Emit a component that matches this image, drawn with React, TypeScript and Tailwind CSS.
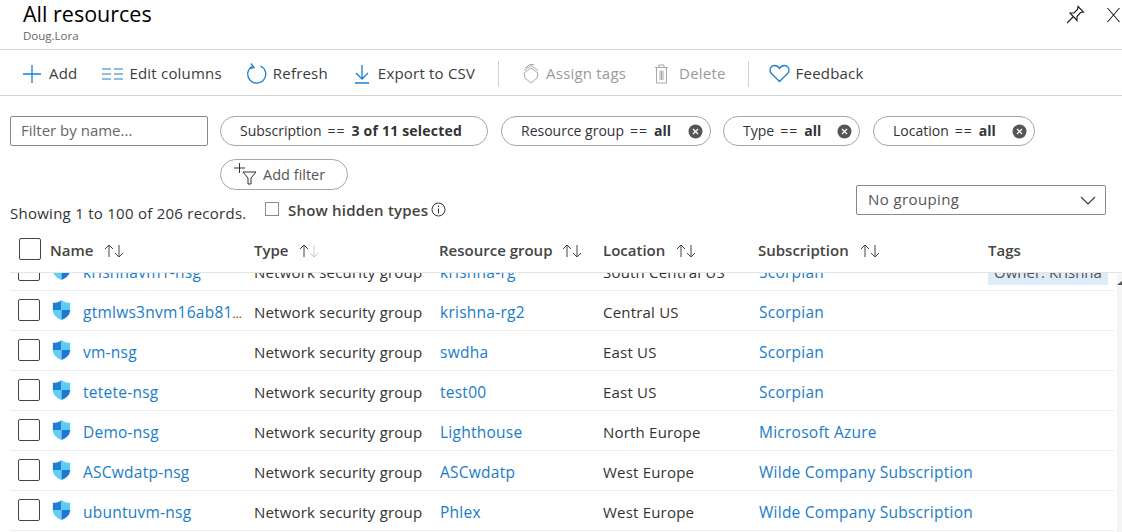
const rows = [
  { name: 'krishnavm1-nsg', group: 'krishna-rg', location: 'South Central US', sub: 'Scorpian', tag: 'Owner: Krishna' },
  { name: 'gtmlws3nvm16ab81', cut: true, group: 'krishna-rg2', location: 'Central US', sub: 'Scorpian' },
  { name: 'vm-nsg', group: 'swdha', location: 'East US', sub: 'Scorpian' },
  { name: 'tetete-nsg', group: 'test00', location: 'East US', sub: 'Scorpian' },
  { name: 'Demo-nsg', group: 'Lighthouse', location: 'North Europe', sub: 'Microsoft Azure' },
  { name: 'ASCwdatp-nsg', group: 'ASCwdatp', location: 'West Europe', sub: 'Wilde Company Subscription' },
  { name: 'ubuntuvm-nsg', group: 'Phlex', location: 'West Europe', sub: 'Wilde Company Subscription' },
]

const gridCols = 'grid grid-cols-[33px_32px_171px_186px_163px_156px_229px_126px] items-center'
const linkText = "whitespace-nowrap pt-[6px] text-[15.5px] font-medium tracking-[0.25px] text-[#1a7cc7]"

const Shield = () => (
  <svg className="ml-px" width="19" height="22" viewBox="0 0 22 24" preserveAspectRatio="none">
    <path d="M11 1 C8 3.5 5 4 1 4 V12 H11 Z" fill="#1f7fd6" />
    <path d="M11 1 C14 3.5 17 4 21 4 V12 H11 Z" fill="#5ccdf2" />
    <path d="M1 12 C1 17.5 6 21 11 23 V12 Z" fill="#62cff3" />
    <path d="M21 12 C21 17.5 16 21 11 23 V12 Z" fill="#1c78d2" />
  </svg>
)

const SortArrows = ({ faded = false }: { faded?: boolean }) => (
  <svg width="22" height="16" viewBox="0 0 22 16" fill="none" strokeWidth="1">
    <path d="M6 14 V2 M2 6 L6 2 L10 6" stroke="#444" />
    <path d="M16 2 V14 M12 10 L16 14 L20 10" stroke={faded ? '#c8c8c8' : '#444'} />
  </svg>
)

const ClearIcon = () => (
  <svg width="15" height="15" viewBox="0 0 15 15">
    <circle cx="7.5" cy="7.5" r="7" fill="#555" />
    <path d="M5 5 L10 10 M10 5 L5 10" stroke="#fff" strokeWidth="1.2" />
  </svg>
)

const Pill = ({ label, value, className }: { label: string; value: string; className: string }) => (
  <div className={`${className} flex h-[30px] items-center rounded-full border border-[#a6a6a6] pl-[19px] pr-[7px] text-[14px] tracking-normal`}>
    <span className="pb-[2px]">{label}</span>
    <span className="ml-[6px] pb-[2px] tracking-[1px]">==</span>
    <span className="ml-[6px] pb-[2px] font-bold">{value}</span>
    <span className="ml-auto flex">
      <ClearIcon />
    </span>
  </div>
)

const ToolbarItem = ({ icon, label, muted, className }: { icon: React.ReactNode; label: string; muted?: boolean; className?: string }) => (
  <div className={`flex items-center ${muted ? 'text-[#9a9a9a]' : 'text-[#3c3c3c]'} ${className ?? ''}`}>
    {icon}
    <span>{label}</span>
  </div>
)

export default function App() {
  return (
    <div className="h-[532px] w-[1122px] overflow-hidden bg-white font-['Open_Sans',sans-serif] text-[15px] tracking-[0.2px] text-[#333]">
      <div className="flex h-[50px] justify-between border-b border-[#d4d4d4] pl-[23px] pr-[2px]">
        <div>
          <h1 className="text-[21.5px] leading-[28px] tracking-normal text-black">All resources</h1>
          <div className="pt-px text-[11.5px] leading-[14px] tracking-normal text-[#666]">Doug.Lora</div>
        </div>
        <div className="flex gap-[22px] pt-[5px]">
          <svg width="19" height="19" viewBox="0 0 19 19" fill="none" stroke="#222" strokeWidth="1.2">
            <path d="M12 1.5 L17.5 7 L14.5 7.5 L11 11.5 L11 15.5 L4 8 L8 8 L11.5 4.5 Z M7 12 L1 18" />
          </svg>
          <svg className="mt-[2px]" width="13" height="16" viewBox="0 0 13 16" fill="none" stroke="#222" strokeWidth="1.1">
            <path d="M0.5 1 L12.5 15 M12.5 1 L0.5 15" />
          </svg>
        </div>
      </div>

      <div className="flex h-[46px] items-center border-b border-[#d4d4d4] pl-[22px] pt-[2px]">
        <ToolbarItem
          label="Add"
          icon={
            <svg className="mr-[7px]" width="20" height="20" viewBox="0 0 20 20" stroke="#1b7fcc" strokeWidth="1.3">
              <path d="M10 1 V19 M1 10 H19" />
            </svg>
          }
        />
        <ToolbarItem
          className="ml-[25px]"
          label="Edit columns"
          icon={
            <svg className="mr-[6px]" width="21" height="14" viewBox="0 0 21 14" stroke="#1b7fcc" strokeWidth="1.2">
              <path d="M0 2 H9 M0 7 H9 M0 12 H9 M12 2 H21 M12 7 H21 M12 12 H21" />
            </svg>
          }
        />
        <ToolbarItem
          className="ml-[24px]"
          label="Refresh"
          icon={
            <svg className="mr-[5px]" width="22" height="24" viewBox="0 0 22 24" fill="none" stroke="#1b7fcc" strokeWidth="1.3">
              <path d="M14.5 4 A9 9 0 1 1 6 4.5 M5 1.5 L8 5.5 L3.5 6.5" />
            </svg>
          }
        />
        <ToolbarItem
          className="ml-[26px]"
          label="Export to CSV"
          icon={
            <svg className="mr-[8px]" width="16" height="20" viewBox="0 0 16 20" fill="none" stroke="#1b7fcc" strokeWidth="1.3">
              <path d="M8 1 V14 M2 9 L8 15 L14 9 M1 19 H15" />
            </svg>
          }
        />
        <div className="ml-[23px] h-[26px] w-px bg-[#d0d0d0]" />
        <ToolbarItem
          muted
          className="ml-[23px]"
          label="Assign tags"
          icon={
            <svg className="mr-[6px]" width="18" height="20" viewBox="0 0 18 20" fill="none" stroke="#a8a8a8" strokeWidth="1">
              <path d="M2 9 L9 4 L16 9 L15 14 L9 19 L3 14 Z M2 6.5 L9 1.5 L16 6.5 M3 4 L8 0.5 L12 0.5" />
            </svg>
          }
        />
        <ToolbarItem
          muted
          className="ml-[28px]"
          label="Delete"
          icon={
            <svg className="mr-[10px]" width="15" height="20" viewBox="0 0 15 20" fill="none" stroke="#a8a8a8" strokeWidth="1">
              <path d="M1 3.5 H14 M5 3 V1 H10 V3 M2.5 4 V19 H12.5 V4 M6 6.5 V16 M7.5 6.5 V16 M9 6.5 V16" />
            </svg>
          }
        />
        <div className="ml-[22px] h-[26px] w-px bg-[#d0d0d0]" />
        <ToolbarItem
          className="ml-[20px]"
          label="Feedback"
          icon={
            <svg className="mr-[6px]" width="21" height="19" viewBox="0 0 21 19" fill="none" stroke="#1b7fcc" strokeWidth="1.3">
              <path d="M10.5 17.5 L2 9 C-0.5 5.5 2 1.5 5.5 1.5 C8 1.5 9.5 3 10.5 4.5 C11.5 3 13 1.5 15.5 1.5 C19 1.5 21.5 5.5 19 9 Z" />
            </svg>
          }
        />
      </div>

      <div className="flex pl-[10px] pt-[20px]">
        <div className="flex h-[30px] w-[198px] items-center rounded-[2px] border border-[#8a8a8a] pb-[2px] pl-[10px] tracking-normal text-[#666]">
          Filter by name...
        </div>
        <div className="ml-[12px] flex gap-[12px]">
          <div className="mr-px flex h-[30px] w-[268px] items-center rounded-full border border-[#a6a6a6] pb-[2px] pl-[19px] text-[14px] tracking-normal">
            <span>Subscription</span>
            <span className="ml-[6px] tracking-[1px]">==</span>
            <span className="ml-[6px] font-bold tracking-[0.2px]">3 of 11 selected</span>
          </div>
          <Pill label="Resource group" value="all" className="w-[210px]" />
          <Pill label="Type" value="all" className="w-[137px]" />
          <Pill label="Location" value="all" className="ml-px w-[162px]" />
        </div>
      </div>

      <div className="flex justify-between pl-[10px] pr-[16px] pt-[13px]">
        <div>
          <div className="ml-[210px] flex h-[31px] w-[128px] items-center rounded-full border border-[#a6a6a6] pl-[13px] text-[14.5px] tracking-normal">
            <svg className="mr-[3px]" width="26" height="24" viewBox="0 0 26 24" fill="none" stroke="#333" strokeWidth="1">
              <path d="M0 5 H11 M5.5 0 V10 M9 9 H22 L17 15 V21 H14 V15 Z" />
            </svg>
            <span className="text-[#555]">Add filter</span>
          </div>
          <div className="mt-[9px] flex items-start">
            <span className="w-[255px] pt-[3px] tracking-[0.26px]">Showing 1 to 100 of 206 records.</span>
            <span className="mt-[3px] h-[14px] w-[14px] border border-[#8a8a8a]" />
            <span className="ml-[9px] font-semibold text-[#444]">Show hidden types</span>
            <svg className="ml-[3px] mt-[3px]" width="15" height="15" viewBox="0 0 15 15" fill="none" stroke="#333">
              <circle cx="7.5" cy="7.5" r="6.5" />
              <path d="M7.5 6.5 V11.5 M7.5 3.5 V5" />
            </svg>
          </div>
        </div>
        <div className="mt-[26px] flex h-[30px] w-[250px] items-center justify-between rounded-[2px] border border-[#8a8a8a] pl-[11px] pr-[9px] tracking-[0.4px] text-[#555]">
          <span className="pb-[2px]">No grouping</span>
          <svg width="16" height="9" viewBox="0 0 16 9" fill="none" stroke="#333" strokeWidth="1.1">
            <path d="M1 1 L8 8 L15 1" />
          </svg>
        </div>
      </div>

      <div className={`${gridCols} ml-[10px] mt-[3px] h-[45px] border-b border-[#e4e4e4] pl-[8px] font-semibold tracking-normal text-[#444]`}>
        <span className="-mt-[2px] ml-px h-[22px] w-[22px] rounded-[2px] border border-[#444]" />
        <span className="col-span-2 -ml-px flex items-center gap-[10px] pt-[2px]">
          Name <SortArrows />
        </span>
        <span className="flex items-center gap-[10px] pt-[2px]">
          Type <SortArrows faded />
        </span>
        <span className="-ml-px flex items-center gap-[9px] pt-[2px]">
          Resource group <SortArrows />
        </span>
        <span className="flex items-center gap-[10px] pt-[2px]">
          Location <SortArrows />
        </span>
        <span className="-ml-px flex items-center gap-[10px] pt-[2px]">
          Subscription <SortArrows />
        </span>
        <span className="pt-[2px]">Tags</span>
      </div>

      <div className="flex h-[260px] justify-between overflow-hidden">
        <div className="-mt-[22px] ml-[10px] w-[1104px]">
          {rows.map((row) => (
            <div className={`${gridCols} h-[40px] border-b border-[#ececec] pl-[8px]`} key={row.name}>
              <span className="h-[22px] w-[22px] rounded-[2px] border border-[#444]" />
              <Shield />
              <a className={linkText}>
                {row.name}
                {row.cut && <span className="text-[12px] tracking-[-0.5px] text-[#444]">…</span>}
              </a>
              <span className="pt-[5px]">Network security group</span>
              <a className={linkText}>{row.group}</a>
              <span className="whitespace-nowrap pt-[5px]">{row.location}</span>
              <a className={linkText}>{row.sub}</a>
              <span className="pt-[4px]">
                {row.tag && <span className="rounded-[2px] bg-[#dcecf9] px-[6px] py-[3px] tracking-normal text-[#555]">{row.tag}</span>}
              </span>
            </div>
          ))}
        </div>
        <div className="w-[5px] bg-[#f5f5f5] pt-[8px]">
          <svg width="5" height="4" viewBox="0 0 5 4">
            <path d="M0 4 L5 4 L5 0 Z" fill="#555" />
          </svg>
        </div>
      </div>
    </div>
  )
}
